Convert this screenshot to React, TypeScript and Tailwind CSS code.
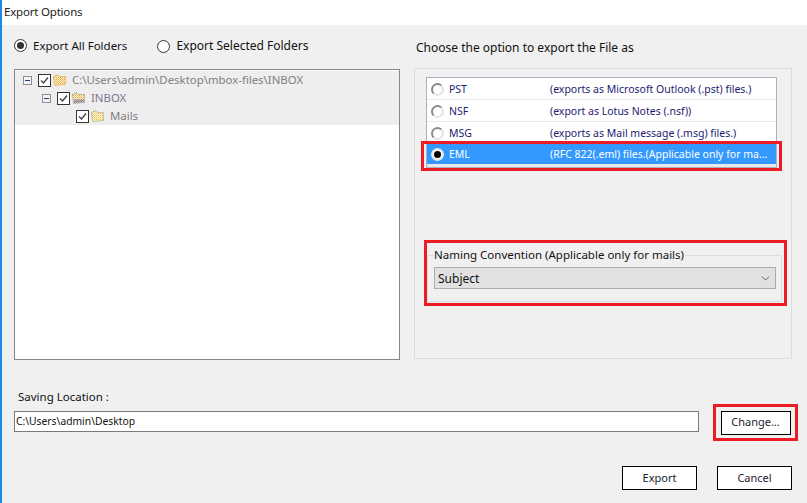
import { ChevronDown } from "lucide-react";

const font = "font-['Noto_Sans','Open_Sans',sans-serif]";

function Radio({ checked }: { checked?: boolean }) {
  return (
    <span className="flex h-[13px] w-[13px] shrink-0 items-center justify-center rounded-full border border-[#333333] bg-white">
      {checked && <span className="h-[7px] w-[7px] rounded-full bg-[#333333]" />}
    </span>
  );
}

function ListRadio({ checked }: { checked?: boolean }) {
  return (
    <span
      className={`flex h-[13px] w-[13px] shrink-0 items-center justify-center rounded-full border-2 bg-white ${
        checked ? "border-[#e8e8e8]" : "border-t-[#8a8a8a] border-l-[#8a8a8a] border-r-[#e4e4e4] border-b-[#e4e4e4]"
      }`}
    >
      {checked && <span className="h-[7px] w-[7px] rounded-full bg-black" />}
    </span>
  );
}

function Check() {
  return (
    <span className="flex h-[13px] w-[13px] shrink-0 items-center justify-center border border-[#333333] bg-white">
      <svg width="11" height="11" viewBox="0 0 11 11" fill="none">
        <path d="M2 5.5 L4.5 8 L9 2.5" stroke="#444444" strokeWidth="1.4" />
      </svg>
    </span>
  );
}

function Expander() {
  return (
    <span className="flex h-[9px] w-[9px] shrink-0 items-center justify-center border border-[#8e8f8f] bg-[#f4f4f4]">
      <span className="h-px w-[5px] bg-[#1f3f7a]" />
    </span>
  );
}

// dithered, disabled-looking folder glyphs
function FolderIcon({ id, colors, edge, lower }: { id: string; colors: string[]; edge: string; lower?: string }) {
  return (
    <svg width="15" height="14" viewBox="0 0 15 14" className="shrink-0">
      <defs>
        <pattern id={id} width="2" height="2" patternUnits="userSpaceOnUse">
          <rect width="2" height="2" fill="#f7f3e6" />
          <rect width="1" height="1" fill={colors[0]} />
          <rect x="1" y="1" width="1" height="1" fill={colors[1]} />
        </pattern>
      </defs>
      <path
        d="M1.5 3.5 L5 1.5 L8 3.5 L13.5 3.5 L13.5 11.5 L2.5 12.5 Z"
        fill={`url(#${id})`}
        stroke={edge}
        strokeWidth="1"
        strokeDasharray="1 1"
      />
      {lower && <path d="M3 8.5 L13 8.5 L13 11 L3 12 Z" fill={lower} opacity="0.55" />}
    </svg>
  );
}

function TreeRow({ indent, expander, label, dark, id, colors, edge, lower }: {
  indent: string;
  expander?: boolean;
  label: string;
  dark?: boolean;
  id: string;
  colors: string[];
  edge: string;
  lower?: string;
}) {
  return (
    <div className={`flex h-[18px] items-center ${indent}`}>
      <span className="flex w-[15px] shrink-0">{expander && <Expander />}</span>
      <Check />
      <span className="ml-px">
        <FolderIcon id={id} colors={colors} edge={edge} lower={lower} />
      </span>
      <span className={`ml-[5px] text-[11.4px] whitespace-nowrap ${dark ? "text-[#7f7690]" : "text-[#808080]"}`}>{label}</span>
    </div>
  );
}

const formats = [
  { name: "PST", desc: "(exports as Microsoft Outlook (.pst) files.)" },
  { name: "NSF", desc: "(export as Lotus Notes (.nsf))" },
  { name: "MSG", desc: "(exports as Mail message (.msg) files.)" },
];

function Btn({ label, className }: { label: string; className: string }) {
  return (
    <button className={`flex items-center justify-center border border-black bg-white text-[11px] text-[#1a1a2e] ${className}`}>
      {label}
    </button>
  );
}

export default function App() {
  return (
    <div className={`flex h-[503px] w-[807px] flex-col overflow-hidden border-l-2 border-[#1e88e5] bg-[#f0f0f0] text-black ${font}`}>
      <div className="flex h-[25px] shrink-0 items-center bg-white pb-[2px] pl-[2px] text-[11.5px] tracking-[-0.2px] text-[#222222]">Export Options</div>

      <div className="flex pr-[15px] pl-3">
        {/* left column */}
        <div className="w-[386px] shrink-0">
          <div className="flex h-[44px] items-start pt-3 text-[#111111]">
            <span className="flex items-center gap-[6px] text-[11.5px]"><Radio checked />Export All Folders</span>
            <span className="ml-[30px] flex items-center gap-[6px] text-[12px]"><Radio />Export Selected Folders</span>
          </div>
          <div className="h-[291px] border border-[#828790] bg-white">
            <div className="mt-px bg-[#eeeeee] pl-2">
              <TreeRow indent="" expander label="C:\Users\admin\Desktop\mbox-files\INBOX" id="f1" colors={["#f5a623", "#f2c14e"]} edge="#d9a441" />
              <TreeRow indent="pl-[19px]" expander label="INBOX" dark id="f2" colors={["#eda92e", "#f0c860"]} edge="#8a8a8a" lower="#5a6fb5" />
              <TreeRow indent="pl-[38px]" label="Mails" id="f3" colors={["#f0c040", "#f5dc80"]} edge="#a09a80" />
            </div>
          </div>
        </div>

        {/* right column */}
        <div className="ml-[14px] w-[378px] shrink-0">
          <div className="flex h-[43px] items-start pt-[14px] pl-[2px] text-[12px] text-[#111111]">Choose the option to export the File as</div>
          <div className="h-[291px] border border-[#dcdcdc] pt-2 pl-[11px]">
            <div className="w-[351px] border border-[#a9b2c0] bg-white">
              {formats.map((f) => (
                <div key={f.name} className="flex h-[22px] items-center border-b border-[#e3e9f5] pt-px pl-[4px] text-[10.5px] text-[#1c1c70]">
                  <ListRadio />
                  <span className="ml-[5px] w-[101px] pt-px">{f.name}</span>
                  <span className="pt-px whitespace-nowrap">{f.desc}</span>
                </div>
              ))}
              <div className="relative">
                <div className="flex h-[20px] items-center bg-[#3399ff] pt-px pl-[4px] text-[10.5px] text-white">
                  <ListRadio checked />
                  <span className="ml-[5px] w-[101px] pt-px">EML</span>
                  <span className="pt-px whitespace-nowrap">(RFC 822(.eml) files.(Applicable only for ma...</span>
                </div>
                <div className="h-[3px] bg-[#e8e8e8]" />
                <div className="absolute -top-[3px] -left-[6px] h-[30px] w-[361px] border-[3px] border-[#ed1c24]" />
              </div>
            </div>

            <div className="mt-[72px] ml-[-2px] h-[66px] w-[363px] border-[3px] border-[#ed1c24] pt-3">
              <div className="relative h-[47px] w-[355px] border border-[#dcdcdc] pt-[11px] pl-[6px]">
                <span className="absolute -top-[9px] left-[5px] bg-[#f0f0f0] px-px text-[11.5px] leading-[16px] text-[#111111]">Naming Convention (Applicable only for mails)</span>
                <div className="flex h-[22px] w-[342px] items-center justify-between border border-[#adadad] bg-[#e1e1e1] pr-[3px] pl-[3px] text-[12px] text-[#111111]">
                  <span className="pt-px">Subject</span>
                  <ChevronDown size={13} strokeWidth={1.5} className="text-[#444444]" />
                </div>
              </div>
            </div>
          </div>
        </div>
      </div>

      {/* saving location */}
      <div className="mt-[29px] pl-4 text-[11.5px] leading-[16px] text-[#111111]">Saving Location :</div>
      <div className="mt-[-1px] flex items-start pl-3">
        <div className="mt-[7px] flex h-[21px] w-[685px] items-center border border-[#7a7a7a] bg-white pl-px text-[10.3px] text-[#111111]">C:\Users\admin\Desktop</div>
        <div className="ml-[14px] flex h-[37px] w-[85px] items-center justify-center border-[3px] border-[#ed1c24]">
          <Btn label="Change..." className="h-[24px] w-[70px]" />
        </div>
      </div>

      <div className="mt-[25px] flex justify-end gap-5 pr-[15px]">
        <Btn label="Export" className="h-[24px] w-[75px]" />
        <Btn label="Cancel" className="h-[24px] w-[75px]" />
      </div>
    </div>
  );
}
